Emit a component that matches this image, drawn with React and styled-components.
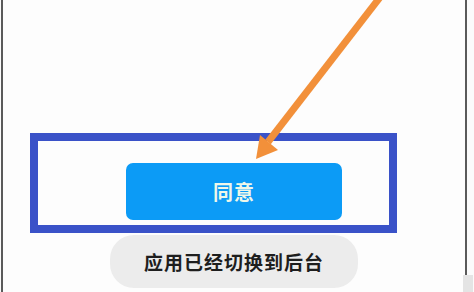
import React from 'react';
import styled, { createGlobalStyle } from 'styled-components';

const GlobalStyle = createGlobalStyle`
  html, body {
    margin: 0;
    padding: 0;
    background: #fbfbfb;
  }
  body {
    font-family: "Noto Sans CJK SC", "Noto Sans", sans-serif;
  }
`;

const Screen = styled.div`
  position: relative;
  width: 474px;
  height: 292px;
  overflow: hidden;
  background: #fbfbfb;
`;

const Phone = styled.div`
  box-sizing: border-box;
  width: 466px;
  height: 292px;
  margin-left: 1px;
  border-left: 2px solid #5a5a5a;
  border-right: 2px solid #5a5a5a;
  background: #fdfdfd;
  padding-top: 133px;
  padding-left: 27px;
  display: flex;
  flex-direction: column;
`;

const Highlight = styled.div`
  box-sizing: border-box;
  width: 367px;
  height: 100px;
  border: 8px solid #3a52c8;
  padding: 22px 0 0 88px;
`;

const AgreeButton = styled.button`
  width: 216px;
  height: 57px;
  border: none;
  border-radius: 7px;
  background: #0c9bf6;
  color: #eef7ea;
  font-family: "Noto Sans CJK SC", sans-serif;
  font-size: 20px;
  font-weight: 700;
  letter-spacing: 1px;
  padding: 0;
`;

const Toast = styled.div`
  align-self: flex-start;
  margin: 2px 0 0 80px;
  width: 248px;
  height: 53px;
  border-radius: 24px;
  background: #ececec;
  color: #1e1e1e;
  font-size: 19px;
  font-weight: 700;
  letter-spacing: 1px;
  display: flex;
  align-items: center;
  justify-content: center;
`;

const Corner = styled.div`
  position: absolute;
  right: 1px;
  bottom: 0;
  width: 10px;
  height: 17px;
  background: #e4e4e4;
`;

const ArrowLayer = styled.svg`
  position: absolute;
  left: 0;
  top: 0;
  pointer-events: none;
`;

const Arrow = () => (
  <ArrowLayer width="474" height="292" viewBox="0 0 474 292">
    <line x1="381" y1="-4" x2="268" y2="142" stroke="#f2903a" strokeWidth="7" />
    <polygon points="256,159 278,150 260,135" fill="#f2903a" />
  </ArrowLayer>
);

export default function App() {
  return (
    <Screen>
      <GlobalStyle />
      <Phone>
        <Highlight>
          <AgreeButton>同意</AgreeButton>
        </Highlight>
        <Toast>应用已经切换到后台</Toast>
      </Phone>
      <Arrow />
      <Corner />
    </Screen>
  );
}
